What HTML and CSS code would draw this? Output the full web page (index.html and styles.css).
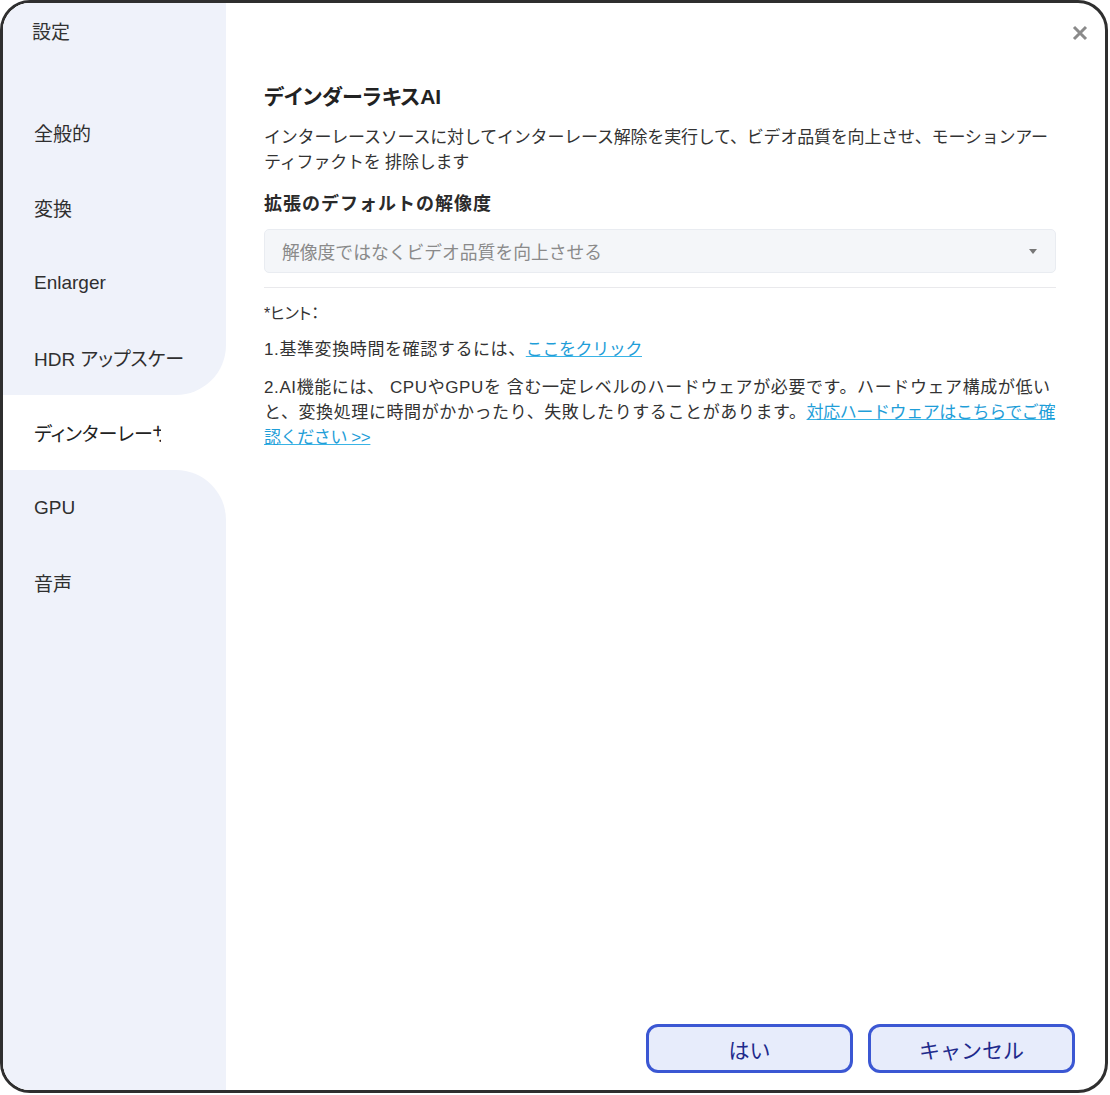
FILE: index.html
```html
<!DOCTYPE html>
<html lang="ja">
<head>
<meta charset="utf-8">
<title>設定</title>
<link rel="stylesheet" href="styles.css">
</head>
<body>
<div class="window">
  <aside class="sidebar">
    <div class="side-title">設定</div>
    <div class="side-item">全般的</div>
    <div class="side-item">変換</div>
    <div class="side-item">Enlarger</div>
    <div class="side-item before-active">HDR アップスケー</div>
    <div class="side-item active"><span class="clip clip-active">ディンターレーサー</span></div>
    <div class="side-item after-active">GPU</div>
    <div class="side-item">音声</div>
    <div class="side-fill"></div>
  </aside>
  <main class="main">
    <div class="topbar">
      <button class="close" aria-label="閉じる">
        <svg width="16" height="16" viewBox="0 0 16 16"><path d="M2 2 L14 14 M14 2 L2 14" stroke="#8a8a8a" stroke-width="3" stroke-linecap="butt"/></svg>
      </button>
    </div>
    <section class="content">
      <h1 class="title">デインダーラキスAI</h1>
      <p class="desc">インターレースソースに対してインターレース解除を実行して、ビデオ品質を向上させ、モーションアー<br>ティファクトを 排除します</p>
      <h2 class="label">拡張のデフォルトの解像度</h2>
      <div class="select">
        <span>解像度ではなくビデオ品質を向上させる</span>
        <span class="caret"></span>
      </div>
      <hr class="divider">
      <p class="hint">*ヒント：</p>
      <p class="line">1.基準変換時間を確認するには、<a href="#" class="tight">ここをクリック</a></p>
      <p class="line">2.AI機能には、 CPUやGPUを 含む一定レベルのハードウェアが必要です。ハードウェア構成が低い<br>と、変換処理に時間がかかったり、失敗したりすることがあります。<a href="#" class="tight">対応ハードウェアはこちらでご確<br>認ください &gt;&gt;</a></p>
    </section>
    <div class="footer">
      <button class="btn">はい</button>
      <button class="btn">キャンセル</button>
    </div>
  </main>
</div>
</body>
</html>
```
FILE: styles.css
```css
html, body {
  margin: 0;
  padding: 0;
  background: #ffffff;
}
body {
  font-family: "Liberation Sans", "Noto Sans CJK JP", sans-serif;
  color: #333333;
}
.window {
  box-sizing: border-box;
  width: 1108px;
  height: 1093px;
  border: 3px solid #2f2f2f;
  border-radius: 30px;
  overflow: hidden;
  display: flex;
  background: #ffffff;
}
.sidebar {
  width: 223px;
  flex: none;
  display: flex;
  flex-direction: column;
  background: #ffffff;
}
.side-title {
  height: 92px;
  box-sizing: border-box;
  padding: 17px 0 0 29px;
  font-size: 19px;
  line-height: 26px;
  background: #eff2fa;
  color: #333;
}
.side-item {
  height: 75px;
  box-sizing: border-box;
  padding-left: 31px;
  display: flex;
  align-items: center;
  font-size: 19px;
  background: #eff2fa;
  color: #2f2f2f;
  white-space: nowrap;
  font-feature-settings: "palt";
}
.side-item.before-active {
  border-bottom-right-radius: 50px;
}
.side-item.after-active {
  border-top-right-radius: 50px;
}
.side-item.active {
  background: #ffffff;
  color: #222;
}
.clip {
  display: block;
  overflow: hidden;
}
.clip-active {
  width: 127px;
}
.side-fill {
  flex: 1;
  background: #eff2fa;
}
.main {
  flex: 1;
  display: flex;
  flex-direction: column;
  min-width: 0;
}
.topbar {
  height: 60px;
  box-sizing: border-box;
  display: flex;
  justify-content: flex-end;
  padding: 19px 14px 0 0;
}
.close {
  width: 22px;
  height: 22px;
  padding: 0;
  border: 0;
  background: transparent;
  display: flex;
  align-items: center;
  justify-content: center;
}
.content {
  padding: 0 49px 0 38px;
}
.title {
  margin: 20px 0 0;
  font-size: 21px;
  line-height: 28px;
  font-weight: bold;
  color: #222;
  font-feature-settings: "palt";
}
.desc {
  margin: 14px 0 0;
  font-size: 17px;
  letter-spacing: -0.2px;
  line-height: 25px;
  color: #333;
}
.label {
  margin: 16px 0 0;
  font-size: 18px;
  letter-spacing: 1px;
  line-height: 26px;
  font-weight: bold;
  color: #2a2a2a;
}
.select {
  margin-top: 12px;
  height: 44px;
  box-sizing: border-box;
  border: 1px solid #e9ecf1;
  border-radius: 5px;
  background: #f4f6f9;
  display: flex;
  align-items: center;
  justify-content: space-between;
  padding: 0 18px 0 17px;
  font-size: 17.8px;
  color: #8a8a8a;
}
.caret {
  width: 0;
  height: 0;
  border-left: 4px solid transparent;
  border-right: 4px solid transparent;
  border-top: 5px solid #777;
}
.divider {
  margin: 14px 0 0;
  border: 0;
  border-top: 1px solid #e9e9ec;
  height: 0;
}
.hint {
  margin: 14px 0 0;
  font-size: 16px;
  line-height: 24px;
  color: #333;
  font-feature-settings: "palt";
}
.line {
  margin: 11px 0 0;
  font-size: 17px;
  letter-spacing: 0.6px;
  line-height: 25px;
  color: #333;
}
.line + .line {
  margin-top: 13px;
}
.line a {
  color: #1f9ed8;
  text-decoration: underline;
  text-decoration-color: #3ab4e6;
}
.line a.tight {
  letter-spacing: -0.4px;
}
.footer {
  margin-top: auto;
  display: flex;
  justify-content: flex-end;
  gap: 15px;
  padding: 0 30px 17px 0;
}
.btn {
  width: 207px;
  height: 49px;
  box-sizing: border-box;
  border: 3px solid #3b57d3;
  border-radius: 12px;
  background: #e7ecfb;
  color: #1e2a8c;
  font-family: "Liberation Sans", "Noto Sans CJK JP", sans-serif;
  font-size: 21px;
  padding: 0;
}
```
